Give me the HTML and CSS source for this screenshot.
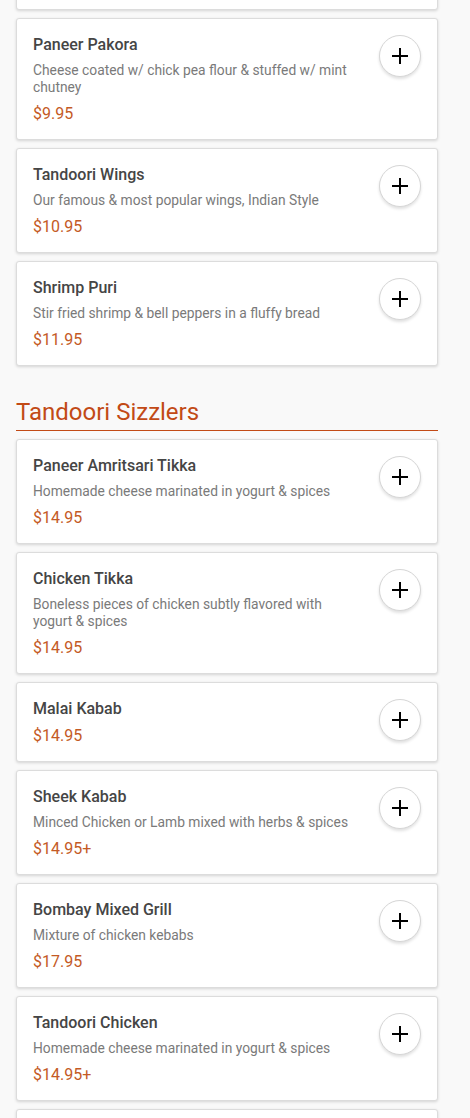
FILE: index.html
```html
<!DOCTYPE html>
<html lang="en">

<head>
    <meta charset="UTF-8" />
    <meta name="viewport" content="width=device-width, initial-scale=1.0" />
    <title>Menu</title>
    <link rel="stylesheet" href="styles.css">
</head>

<body>
    <div class="menu">
        <!-- Appetizers (tail) -->
        <div class="item-list first">
            <div class="item-card">
                <div class="item-info">
                    <div class="item-name">Vegetable Samosa</div>
                    <div class="item-desc">Crispy pastry stuffed w/ spiced potatoes &amp; peas</div>
                    <div class="item-price">$6.95</div>
                </div>
                <button class="add-button"><svg viewBox="0 0 20 20" width="20" height="20"><path d="M10 2v16M2 10h16" stroke="#000" stroke-width="2" fill="none"/></svg></button>
            </div>
            <div class="item-card">
                <div class="item-info">
                    <div class="item-name">Paneer Pakora</div>
                    <div class="item-desc">Cheese coated w/ chick pea flour &amp; stuffed w/ mint chutney</div>
                    <div class="item-price">$9.95</div>
                </div>
                <button class="add-button"><svg viewBox="0 0 20 20" width="20" height="20"><path d="M10 2v16M2 10h16" stroke="#000" stroke-width="2" fill="none"/></svg></button>
            </div>
            <div class="item-card">
                <div class="item-info">
                    <div class="item-name">Tandoori Wings</div>
                    <div class="item-desc">Our famous &amp; most popular wings, Indian Style</div>
                    <div class="item-price">$10.95</div>
                </div>
                <button class="add-button"><svg viewBox="0 0 20 20" width="20" height="20"><path d="M10 2v16M2 10h16" stroke="#000" stroke-width="2" fill="none"/></svg></button>
            </div>
            <div class="item-card">
                <div class="item-info">
                    <div class="item-name">Shrimp Puri</div>
                    <div class="item-desc">Stir fried shrimp &amp; bell peppers in a fluffy bread</div>
                    <div class="item-price">$11.95</div>
                </div>
                <button class="add-button"><svg viewBox="0 0 20 20" width="20" height="20"><path d="M10 2v16M2 10h16" stroke="#000" stroke-width="2" fill="none"/></svg></button>
            </div>
        </div>

        <!-- Tandoori Sizzlers -->
        <h2 class="section-title">Tandoori Sizzlers</h2>
        <div class="item-list">
            <div class="item-card">
                <div class="item-info">
                    <div class="item-name">Paneer Amritsari Tikka</div>
                    <div class="item-desc">Homemade cheese marinated in yogurt &amp; spices</div>
                    <div class="item-price">$14.95</div>
                </div>
                <button class="add-button"><svg viewBox="0 0 20 20" width="20" height="20"><path d="M10 2v16M2 10h16" stroke="#000" stroke-width="2" fill="none"/></svg></button>
            </div>
            <div class="item-card">
                <div class="item-info">
                    <div class="item-name">Chicken Tikka</div>
                    <div class="item-desc">Boneless pieces of chicken subtly flavored with yogurt &amp; spices</div>
                    <div class="item-price">$14.95</div>
                </div>
                <button class="add-button"><svg viewBox="0 0 20 20" width="20" height="20"><path d="M10 2v16M2 10h16" stroke="#000" stroke-width="2" fill="none"/></svg></button>
            </div>
            <div class="item-card">
                <div class="item-info">
                    <div class="item-name">Malai Kabab</div>
                    <div class="item-price">$14.95</div>
                </div>
                <button class="add-button"><svg viewBox="0 0 20 20" width="20" height="20"><path d="M10 2v16M2 10h16" stroke="#000" stroke-width="2" fill="none"/></svg></button>
            </div>
            <div class="item-card">
                <div class="item-info">
                    <div class="item-name">Sheek Kabab</div>
                    <div class="item-desc">Minced Chicken or Lamb mixed with herbs &amp; spices</div>
                    <div class="item-price">$14.95+</div>
                </div>
                <button class="add-button"><svg viewBox="0 0 20 20" width="20" height="20"><path d="M10 2v16M2 10h16" stroke="#000" stroke-width="2" fill="none"/></svg></button>
            </div>
            <div class="item-card">
                <div class="item-info">
                    <div class="item-name">Bombay Mixed Grill</div>
                    <div class="item-desc">Mixture of chicken kebabs</div>
                    <div class="item-price">$17.95</div>
                </div>
                <button class="add-button"><svg viewBox="0 0 20 20" width="20" height="20"><path d="M10 2v16M2 10h16" stroke="#000" stroke-width="2" fill="none"/></svg></button>
            </div>
            <div class="item-card">
                <div class="item-info">
                    <div class="item-name">Tandoori Chicken</div>
                    <div class="item-desc">Homemade cheese marinated in yogurt &amp; spices</div>
                    <div class="item-price">$14.95+</div>
                </div>
                <button class="add-button"><svg viewBox="0 0 20 20" width="20" height="20"><path d="M10 2v16M2 10h16" stroke="#000" stroke-width="2" fill="none"/></svg></button>
            </div>
            <div class="item-card">
                <div class="item-info">
                    <div class="item-name">Tandoori Shrimp</div>
                    <div class="item-desc">Jumbo shrimp marinated in yogurt &amp; spices</div>
                    <div class="item-price">$18.95</div>
                </div>
                <button class="add-button"><svg viewBox="0 0 20 20" width="20" height="20"><path d="M10 2v16M2 10h16" stroke="#000" stroke-width="2" fill="none"/></svg></button>
            </div>
        </div>
    </div>
</body>

</html>
```

FILE: styles.css
```css
body {
    font-family: Roboto, "Liberation Sans", Arial, sans-serif;
    margin: 0;
    background-color: #f9f9f9;
    overflow: hidden;
}

.menu {
    width: 422px;
    margin-left: 16px;
}

.item-list {
    display: flex;
    flex-direction: column;
    gap: 8px;
}

.item-list.first {
    margin-top: -95px;
}

.item-card {
    display: flex;
    align-items: flex-start;
    gap: 12px;
    padding: 17px 16px 15px 16px;
    background: white;
    border: 1px solid #dcdcdc;
    border-radius: 3px;
    box-shadow: 0 1px 3px rgba(0, 0, 0, 0.15);
}

.item-info {
    flex: 1;
    min-width: 0;
}

.item-name {
    font-size: 16px;
    font-weight: 500;
    line-height: 18px;
    color: #454545;
}

.item-desc {
    font-size: 13.8px;
    line-height: 17px;
    color: #7a7a7a;
    margin-top: 8px;
    padding-right: 14px;
}

.item-price {
    font-size: 16px;
    line-height: 20px;
    color: #c45a25;
    margin-top: 8px;
}

.add-button {
    flex: 0 0 auto;
    width: 42px;
    height: 42px;
    margin-top: -1px;
    border-radius: 50%;
    border: 1px solid #d6d6d6;
    background: white;
    box-shadow: 0 2px 3px rgba(0, 0, 0, 0.12);
    display: flex;
    align-items: center;
    justify-content: center;
    padding: 0;
    cursor: pointer;
}

.section-title {
    font-size: 24px;
    font-weight: 400;
    color: #c24a16;
    margin: 31px 0 8px 0;
    padding: 1px 0 4px 0;
    line-height: 28px;
    border-bottom: 1px solid #c24a16;
}
```
